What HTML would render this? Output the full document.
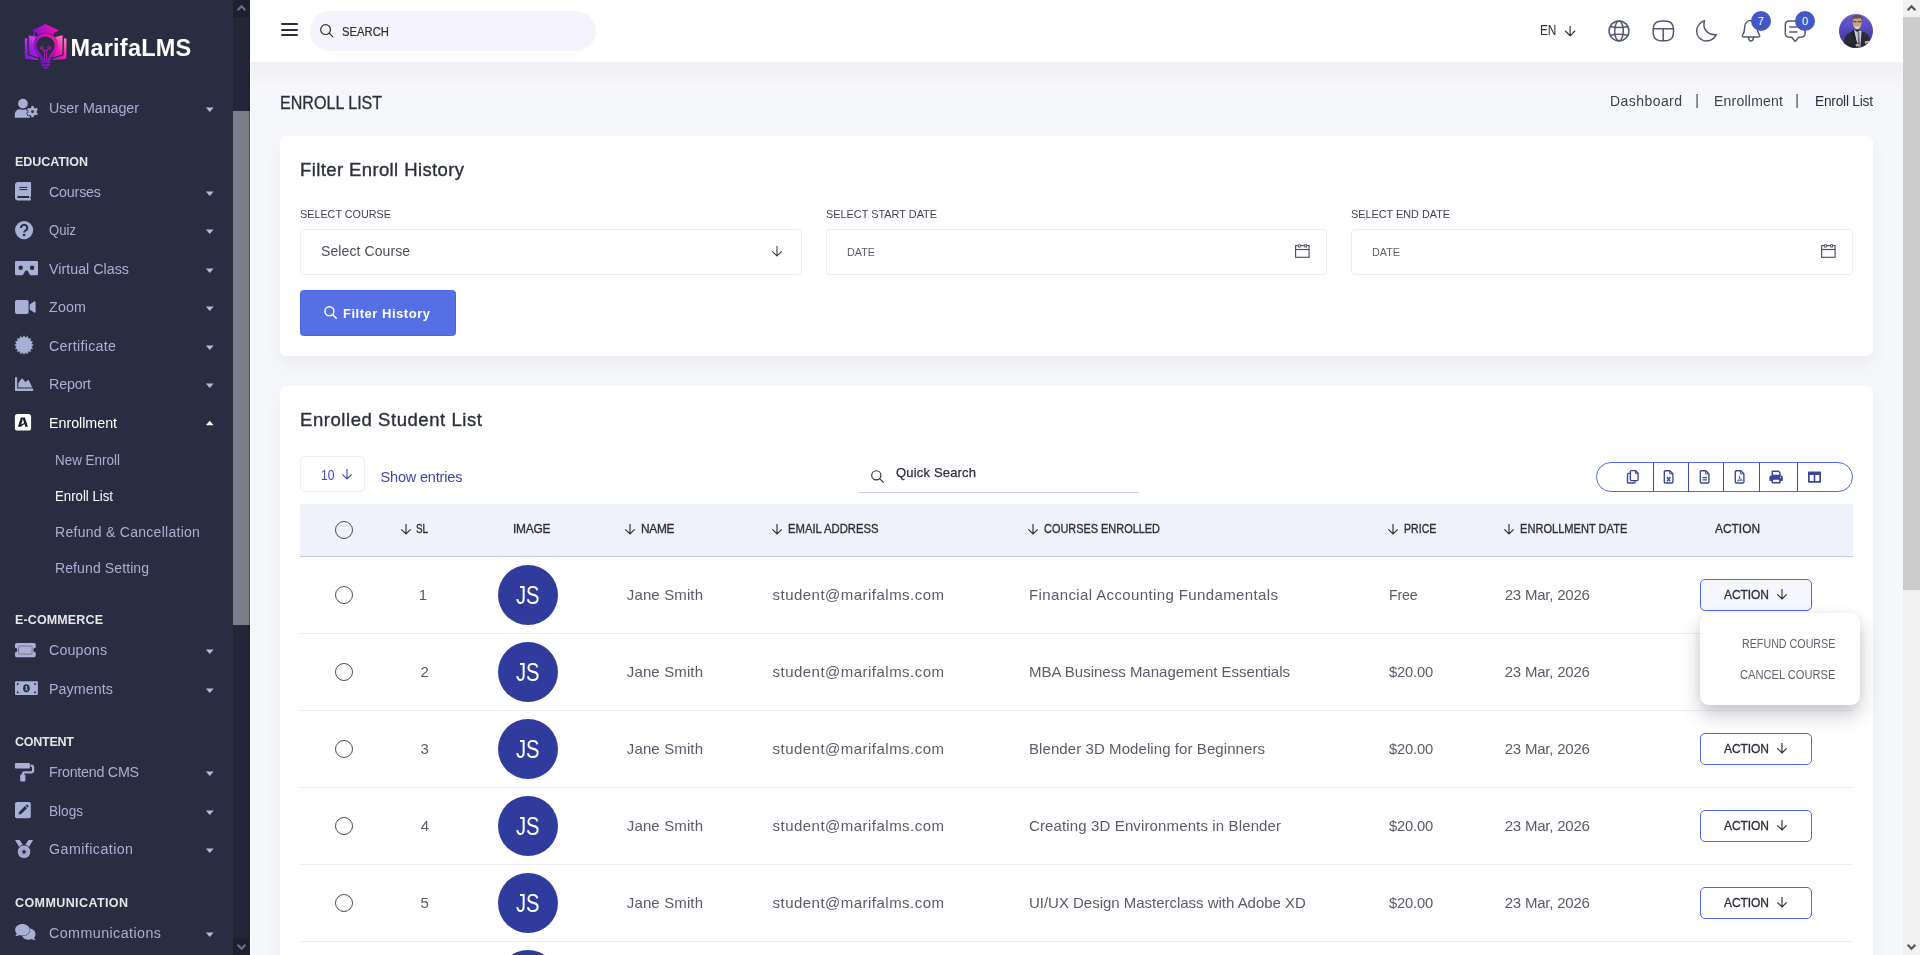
<!DOCTYPE html>
<html lang="en">
<head>
<meta charset="utf-8">
<title>Enroll List</title>
<style>
*{box-sizing:border-box;margin:0;padding:0}
html,body{width:1920px;height:955px;overflow:hidden;background:#f6f7fa;font-family:"Liberation Sans",sans-serif;}
.abs,.t,svg.i{position:absolute}
.t{white-space:pre;line-height:24px;height:24px;}
#page{position:absolute;left:0;top:0;width:1920px;height:955px;overflow:hidden;background:#f6f7fa}
/* sidebar */
#sb{left:0;top:0;width:233px;height:955px;background:#292d41}
#sbtrack{left:233px;top:0;width:17px;height:955px;background:#242638}
#sbthumb{left:233px;top:111px;width:17px;height:514px;background:#7b7d89}
.caret{width:0;height:0;border-left:4.5px solid transparent;border-right:4.5px solid transparent;border-top:5px solid #a8b1d3}
.caret.up{border-top:none;border-bottom:5px solid #fff}
/* header */
#hd{left:250px;top:0;width:1653px;height:62px;background:#fff}
#hdsh{left:250px;top:62px;width:1653px;height:26px;background:linear-gradient(#efeff4,#f6f7fb)}
#srch{left:310px;top:11px;width:286px;height:40px;border-radius:20px;background:#f4f4fa}
.bar{left:281px;width:16.5px;height:2.4px;background:#2b2f3a;border-radius:1px}
/* page scrollbar */
#pgtrack{left:1903px;top:0;width:17px;height:955px;background:#f1f1f1}
#pgthumb{left:1903px;top:17px;width:17px;height:573px;background:#cccccc}
/* cards */
.card{background:#fff;border-radius:6px;left:280px;width:1593px;box-shadow:0 10px 18px rgba(90,90,130,.06)}
.inp{height:46px;top:229px;border:1px solid #eceef4;border-radius:4px;background:#fff}
#fbtn{left:300px;top:290px;width:156px;height:46px;background:#566fe4;border:1px solid #4a63e2;border-radius:3.5px}
#thead{left:300px;top:504px;width:1553px;height:53px;background:#eff2f8;border-bottom:1px solid #c5cbe4}
.rb{left:300px;width:1553px;height:1px;background:#eceef4}
.cb{width:18px;height:18px;border:1.3px solid #4a4d55;border-radius:50%;left:335px;background:#fff}
.av{left:498px;width:60px;height:60px;border-radius:50%;background:#303b9e;color:#fff;text-align:center;font-size:25px;line-height:60px;letter-spacing:0.5px}
.ab{left:1700px;width:112px;height:32px;border:1.2px solid #4f64e6;border-radius:5px;background:#fff}
#dd{left:1700px;top:613px;width:160px;height:92px;background:#fff;border-radius:9px;box-shadow:0 10px 20px rgba(20,22,40,.22),0 2px 8px rgba(20,22,40,.06)}
#bg{left:1596px;top:462px;width:257px;height:30px;border:1px solid #5468e2;border-radius:15px;background:#fff}
.dv{top:462.5px;width:1px;height:29px;background:#3f4fae}
#sel10{left:300px;top:456px;width:64.5px;height:36px;border:1px solid #eceef4;border-radius:5px;background:#fff}
#qsl{left:859px;top:491.5px;width:280px;height:1px;background:#c4c9dc}
.badge{width:22px;height:22px;border-radius:50%;background:#4457c8;color:#fff;font-size:11px;line-height:22px;text-align:center}
</style>
</head>
<body>
<div id="page">
<!-- sidebar -->
<div id="sb" class="abs"></div>
<div id="sbtrack" class="abs"></div>
<div id="sbthumb" class="abs"></div>
<div class="abs" style="left:249px;top:0;width:1px;height:955px;background:rgba(10,12,30,.45)"></div>
<div class="abs" style="left:250px;top:0;width:1.2px;height:955px;background:#fff;z-index:2"></div>
<svg class="i" style="left:20px;top:18px" width="52" height="56" viewBox="0 0 52 56"><defs>
<linearGradient id="lg1" x1="0" y1="1" x2="1" y2="0"><stop offset="0" stop-color="#6a10d2"/><stop offset="0.45" stop-color="#a80fc8"/><stop offset="0.8" stop-color="#f012a8"/><stop offset="1" stop-color="#ff2aa0"/></linearGradient>
<linearGradient id="lgL" x1="0" y1="1" x2="0.6" y2="0"><stop offset="0" stop-color="#7510d0"/><stop offset="0.6" stop-color="#b026e0"/><stop offset="1" stop-color="#e060f0"/></linearGradient>
<linearGradient id="lgR" x1="0" y1="1" x2="0.7" y2="0"><stop offset="0" stop-color="#b010c0"/><stop offset="0.5" stop-color="#f018b0"/><stop offset="1" stop-color="#ff70c0"/></linearGradient>
<linearGradient id="lgC" x1="0" y1="0.6" x2="1" y2="0.3"><stop offset="0" stop-color="#7a14d4"/><stop offset="0.5" stop-color="#c010c0"/><stop offset="1" stop-color="#ff10a0"/></linearGradient>
<linearGradient id="lgB" x1="0" y1="0" x2="1" y2="0"><stop offset="0" stop-color="#6c12d0"/><stop offset="1" stop-color="#a010c8"/></linearGradient>
</defs><path d="M4.70 20.60L7.20 20.20L7.60 37.20L18.00 40.80L18.60 42.20L4.90 40.80z" fill="url(#lgL)"/><path d="M8.60 17.40L16.40 18.60C13.00 23.00 12.40 31.00 19.40 39.80L8.90 36.60z" fill="url(#lgL)"/><path d="M46.50 20.60L44.00 20.20L43.60 37.20L33.00 40.80L32.40 42.20L46.30 40.80z" fill="url(#lgR)"/><path d="M42.60 17.20L34.80 19.00C38.20 23.00 38.80 31.00 31.60 39.80L42.30 36.60z" fill="url(#lgR)"/><path fill-rule="evenodd" d="M25.50 15.60C32.60 15.60 37.60 20.80 37.60 27.40C37.60 32.60 34.60 35.00 31.40 39.00C30.40 40.30 30.40 41.30 30.20 42.40L20.80 42.40C20.60 41.30 20.60 40.30 19.60 39.00C16.40 35.00 13.40 32.60 13.40 27.40C13.40 20.80 18.40 15.60 25.50 15.60zM25.50 18.40C20.20 18.40 16.30 22.40 16.30 27.60C16.30 31.60 18.80 33.80 21.40 37.20C22.60 38.80 22.90 40.20 23.00 41.60L28.00 41.60C28.10 40.20 28.40 38.80 29.60 37.20C32.20 33.80 34.70 31.60 34.70 27.60C34.70 22.40 30.80 18.40 25.50 18.40z" fill="url(#lg1)"/><g fill="none" stroke="#c41cc0" stroke-width="0.9"><circle cx="21.799999999999997" cy="30" r="1.45"/><circle cx="29.200000000000003" cy="30" r="1.45"/><path d="M22.60 31.20C23.60 32.00 24.30 32.60 24.30 34.00L24.30 42.00M28.40 31.20C27.40 32.00 26.70 32.60 26.70 34.00L26.70 42.00M23.00 32.40L28.00 32.40"/></g><path d="M20.50 43.40L30.60 42.60L30.50 44.60L20.60 45.40z M20.90 46.40L30.30 45.60L30.00 47.60L21.30 48.40z M22.60 49.20L28.80 48.60C28.00 50.40 26.80 51.10 25.60 51.10C24.40 51.10 23.40 50.40 22.60 49.20z" fill="url(#lgB)"/><path d="M25.50 5.90L39.20 12.40L33.80 15.00L33.80 17.60C29.00 14.40 22.00 14.40 17.30 17.60L17.30 15.10L12.00 12.40z" fill="url(#lgC)"/><path d="M14.00 13.40L14.60 13.70L14.90 19.40L13.20 19.40z" fill="#8a22d8"/></svg>
<svg class="i" style="left:205px;top:107.1px" width="10" height="6" viewBox="0 0 10 6"><path d="M0.9 0.6h7.7L4.75 5.1z" fill="#b3bbdf"/></svg>
<svg class="i" style="left:205px;top:191.1px" width="10" height="6" viewBox="0 0 10 6"><path d="M0.9 0.6h7.7L4.75 5.1z" fill="#b3bbdf"/></svg>
<svg class="i" style="left:205px;top:229.1px" width="10" height="6" viewBox="0 0 10 6"><path d="M0.9 0.6h7.7L4.75 5.1z" fill="#b3bbdf"/></svg>
<svg class="i" style="left:205px;top:268.1px" width="10" height="6" viewBox="0 0 10 6"><path d="M0.9 0.6h7.7L4.75 5.1z" fill="#b3bbdf"/></svg>
<svg class="i" style="left:205px;top:306.1px" width="10" height="6" viewBox="0 0 10 6"><path d="M0.9 0.6h7.7L4.75 5.1z" fill="#b3bbdf"/></svg>
<svg class="i" style="left:205px;top:345.1px" width="10" height="6" viewBox="0 0 10 6"><path d="M0.9 0.6h7.7L4.75 5.1z" fill="#b3bbdf"/></svg>
<svg class="i" style="left:205px;top:383.1px" width="10" height="6" viewBox="0 0 10 6"><path d="M0.9 0.6h7.7L4.75 5.1z" fill="#b3bbdf"/></svg>
<svg class="i" style="left:205px;top:649.1px" width="10" height="6" viewBox="0 0 10 6"><path d="M0.9 0.6h7.7L4.75 5.1z" fill="#b3bbdf"/></svg>
<svg class="i" style="left:205px;top:688.1px" width="10" height="6" viewBox="0 0 10 6"><path d="M0.9 0.6h7.7L4.75 5.1z" fill="#b3bbdf"/></svg>
<svg class="i" style="left:205px;top:771.1px" width="10" height="6" viewBox="0 0 10 6"><path d="M0.9 0.6h7.7L4.75 5.1z" fill="#b3bbdf"/></svg>
<svg class="i" style="left:205px;top:810.1px" width="10" height="6" viewBox="0 0 10 6"><path d="M0.9 0.6h7.7L4.75 5.1z" fill="#b3bbdf"/></svg>
<svg class="i" style="left:205px;top:848.1px" width="10" height="6" viewBox="0 0 10 6"><path d="M0.9 0.6h7.7L4.75 5.1z" fill="#b3bbdf"/></svg>
<svg class="i" style="left:205px;top:932.1px" width="10" height="6" viewBox="0 0 10 6"><path d="M0.9 0.6h7.7L4.75 5.1z" fill="#b3bbdf"/></svg>
<svg class="i" style="left:205px;top:419.5px" width="10" height="6" viewBox="0 0 10 6"><path d="M0.9 5.2h7.7L4.75 0.7z" fill="#ffffff"/></svg>
<svg class="i" style="left:14px;top:98px" width="26" height="22" viewBox="0 0 26 22" ><circle cx="8.95" cy="5.65" r="4.85" fill="#a8b1d3"/><path d="M0.8 19.7v-3.6a4.9 4.9 0 0 1 4.9-4.9h0.7a6 6 0 0 0 5.1 0h0.7a4.9 4.9 0 0 1 3.6 1.6v6.9z" fill="#a8b1d3"/><path d="M17.20 9.66L17.31 8.07L19.69 8.07L19.80 9.66L21.31 10.53L22.74 9.84L23.92 11.89L22.61 12.78L22.61 14.52L23.92 15.41L22.74 17.46L21.31 16.77L19.80 17.64L19.69 19.23L17.31 19.23L17.20 17.64L15.69 16.77L14.26 17.46L13.08 15.41L14.39 14.52L14.39 12.78L13.08 11.89L14.26 9.84L15.69 10.53z" fill="#a8b1d3" stroke="#292d41" stroke-width="1.6" stroke-linejoin="round" paint-order="stroke"/><circle cx="18.5" cy="13.65" r="1.45" fill="#292d41"/></svg>
<svg class="i" style="left:14px;top:181px" width="20" height="21" viewBox="0 0 20 21" ><path d="M4 1h12.2a0.9 0.9 0 0 1 0.9 0.9v12.6a0.9 0.9 0 0 1-0.6 0.85v2.3a0.9 0.9 0 0 1 0.6 0.85v0a0.9 0.9 0 0 1-0.9 0.9H4a3 3 0 0 1-3-3V4a3 3 0 0 1 3-3z" fill="#a8b1d3"/><rect x="5.4" y="5.9" width="7.9" height="1" fill="#292d41"/><rect x="5.4" y="8.1" width="7.9" height="1" fill="#292d41"/><path d="M4.2 14.9h10.9v2H4.2a1 1 0 0 1 0-2z" fill="#292d41"/></svg>
<svg class="i" style="left:14px;top:220px" width="21" height="21" viewBox="0 0 21 21" ><circle cx="10.1" cy="10.1" r="9.1" fill="#a8b1d3"/><path d="M7 7.9a3.15 3 0 1 1 4.6 2.6c-1 0.6-1.45 1-1.45 2.1" fill="none" stroke="#292d41" stroke-width="2"/><circle cx="10.1" cy="15" r="1.35" fill="#292d41"/></svg>
<svg class="i" style="left:14px;top:260px" width="26" height="17" viewBox="0 0 26 17" ><path d="M2.3 1h20.4a1.3 1.3 0 0 1 1.3 1.3v11.7a1.3 1.3 0 0 1-1.3 1.3h-5.6a1.7 1.7 0 0 1-1.5-0.95l-1.45-2.9a1.9 1.9 0 0 0-3.3 0l-1.45 2.9a1.7 1.7 0 0 1-1.5 0.95H2.3a1.3 1.3 0 0 1-1.3-1.3V2.3a1.3 1.3 0 0 1 1.3-1.3z" fill="#a8b1d3"/><circle cx="6.7" cy="7.75" r="2.25" fill="#292d41"/><circle cx="18.1" cy="7.75" r="2.25" fill="#292d41"/></svg>
<svg class="i" style="left:14px;top:299px" width="23" height="16" viewBox="0 0 23 16" ><rect x="1" y="1" width="13.6" height="14" rx="2" fill="#a8b1d3"/><path d="M15.7 5.6l4.4-3.05a0.95 0.95 0 0 1 1.5 0.8v9.3a0.95 0.95 0 0 1-1.5 0.8l-4.4-3.05z" fill="#a8b1d3"/></svg>
<svg class="i" style="left:14px;top:335px" width="20" height="21" viewBox="0 0 20 21" ><path d="M10.00 0.60L11.46 2.74L13.64 1.32L14.17 3.86L16.72 3.38L16.24 5.93L18.78 6.46L17.36 8.64L19.50 10.10L17.36 11.56L18.78 13.74L16.24 14.27L16.72 16.82L14.17 16.34L13.64 18.88L11.46 17.46L10.00 19.60L8.54 17.46L6.36 18.88L5.83 16.34L3.28 16.82L3.76 14.27L1.22 13.74L2.64 11.56L0.50 10.10L2.64 8.64L1.22 6.46L3.76 5.93L3.28 3.38L5.83 3.86L6.36 1.32L8.54 2.74z" fill="#a8b1d3" stroke="#a8b1d3" stroke-width="0.3" stroke-linejoin="round"/></svg>
<svg class="i" style="left:14px;top:376px" width="20" height="16" viewBox="0 0 20 16" ><path d="M1 1.3h2.2v11.3h15.9v2.3H1z" fill="#a8b1d3"/><path d="M4.3 11.6V7.2L7.6 2.6a0.45 0.45 0 0 1 0.7 0L11.3 6l2.9-1.9a0.45 0.45 0 0 1 0.6 0.15L18.3 11.6z" fill="#a8b1d3"/></svg>
<svg class="i" style="left:14px;top:413px" width="19" height="19" viewBox="0 0 19 19" ><rect x="0.9" y="1" width="16.2" height="16.6" rx="2.7" fill="#ffffff"/><path fill-rule="evenodd" d="M3.9 13.8L6.85 4.4H10.95L13.9 13.8H11.25L10.45 11.1L6.9 13.8z M8.9 6L7.25 11.55L10.1 10.1z" fill="#1e2133"/></svg>
<svg class="i" style="left:14px;top:642px" width="23" height="17" viewBox="0 0 23 17" ><path d="M2.6 1h17.5a1.6 1.6 0 0 1 1.6 1.6v3.1a2.4 2.4 0 0 0 0 4.8v3.1a1.6 1.6 0 0 1-1.6 1.6H2.6a1.6 1.6 0 0 1-1.6-1.6v-3.1a2.4 2.4 0 0 0 0-4.8V2.6a1.6 1.6 0 0 1 1.6-1.6z" fill="#a8b1d3"/><rect x="4.6" y="4.1" width="13.5" height="8" rx="0.8" fill="none" stroke="#6d7393" stroke-width="0.9"/></svg>
<svg class="i" style="left:14px;top:680px" width="26" height="17" viewBox="0 0 26 17" ><rect x="1" y="1.3" width="22.9" height="13.7" rx="1" fill="#a8b1d3"/><ellipse cx="12.4" cy="8.2" rx="3.3" ry="4" fill="#292d41"/><path d="M11.3 6.6l1.1-0.8h0.7v3.6h0.8v0.95h-2.9v-0.95h0.9V7.2l-0.6 0.25z" fill="#a8b1d3"/><path d="M2.9 5.2a2 2 0 0 0 2-2h-2z M21.9 5.2a2 2 0 0 1-2-2h2z M2.9 11.2a2 2 0 0 1 2 2h-2z M21.9 11.2a2 2 0 0 0-2 2h2z" fill="#292d41"/></svg>
<svg class="i" style="left:14px;top:762px" width="21" height="21" viewBox="0 0 21 21" ><rect x="0.9" y="0.9" width="15" height="5.6" rx="1.1" fill="#a8b1d3"/><path d="M16.6 3.7h0.6a1.9 1.9 0 0 1 1.9 1.9v2.9a1.9 1.9 0 0 1-1.9 1.9h-6.5a1.9 1.9 0 0 0-1.9 1.9v1.3" fill="none" stroke="#a8b1d3" stroke-width="2.2"/><rect x="6.2" y="12.5" width="5.2" height="7" rx="1.1" fill="#a8b1d3"/></svg>
<svg class="i" style="left:14px;top:801px" width="18" height="19" viewBox="0 0 18 19" ><rect x="1" y="1" width="15.8" height="16.2" rx="2" fill="#a8b1d3"/><path d="M4.6 13.6l0.5-2.6 5.9-5.9 2.1 2.1-5.9 5.9z M11.7 4.4l0.65-0.65a0.7 0.7 0 0 1 1 0l1.1 1.1a0.7 0.7 0 0 1 0 1l-0.65 0.65z" fill="#292d41"/></svg>
<svg class="i" style="left:14px;top:839px" width="21" height="21" viewBox="0 0 21 21" ><path d="M1 1h4.6l5 7.6-3.7 2.2z M19.1 1h-4.6l-4.9 7.5 3.6 2.3z" fill="#a8b1d3"/><circle cx="10.05" cy="12.8" r="6.7" fill="#a8b1d3" stroke="#292d41" stroke-width="0.9"/><circle cx="10.05" cy="12.8" r="4.3" fill="none" stroke="#8f97bb" stroke-width="0.7"/><path d="M10.05 9.80L10.84 11.81L13.00 11.94L11.33 13.32L11.87 15.41L10.05 14.25L8.23 15.41L8.77 13.32L7.10 11.94L9.26 11.81z" fill="#292d41"/></svg>
<svg class="i" style="left:14px;top:922px" width="23" height="20" viewBox="0 0 23 20" ><path d="M14.5 6.3c3.9 0 7 2.6 7 5.9 0 1.35-0.55 2.6-1.45 3.6 0.35 0.9 1 1.7 1.6 2.35-1.5 0.1-2.9-0.4-3.9-1.05-1 0.4-2.1 0.65-3.25 0.65-3.9 0-7-2.6-7-5.9z" fill="#a8b1d3"/><path d="M8.45 1.9c4 0 7.3 2.6 7.3 5.85s-3.3 5.85-7.3 5.85c-1.15 0-2.25-0.2-3.2-0.6-1 0.7-2.5 1.2-4.2 1.15 0.75-0.75 1.35-1.5 1.7-2.45C1.75 10.65 1.15 9.3 1.15 7.75c0-3.25 3.3-5.85 7.3-5.85z" fill="#a8b1d3" stroke="#292d41" stroke-width="1.1" paint-order="stroke"/></svg>
<!-- header -->
<div id="hdsh" class="abs"></div>
<div id="hd" class="abs"></div>
<div class="abs bar" style="top:23.1px"></div>
<div class="abs bar" style="top:28.5px"></div>
<div class="abs bar" style="top:33.9px"></div>
<div id="srch" class="abs"></div>
<svg class="i" style="left:318px;top:22px" width="18" height="18" viewBox="0 0 18 18"><circle cx="7.6" cy="7.6" r="4.9" fill="none" stroke="#2b2f3a" stroke-width="1.2"/><path d="M11.2 11.2l3.6 3.6" stroke="#2b2f3a" stroke-width="1.2" stroke-linecap="round"/></svg>
<svg class="i" style="left:1562px;top:24px" width="16" height="15" viewBox="0 0 16 15"><path d="M8.1 2.2v9.4M3.4 7l4.7 4.8 4.7-4.8" fill="none" stroke="#2b2f3a" stroke-width="1.15" stroke-linecap="round" stroke-linejoin="round"/></svg>
<svg class="i" style="left:1607px;top:19px" width="24" height="24" viewBox="0 0 24 24"><g fill="none" stroke="#535971" stroke-width="1.5"><circle cx="12" cy="11.9" r="9.95"/><ellipse cx="12" cy="11.9" rx="4.3" ry="9.95"/><path d="M2.9 7.6c5.5 1.1 12.7 1.1 18.2 0M2.9 16.2c5.5-1.1 12.7-1.1 18.2 0"/></g></svg>
<svg class="i" style="left:1651px;top:19px" width="25" height="24" viewBox="0 0 25 24"><g fill="none" stroke="#535971" stroke-width="1.5"><path d="M12.35 1.95c7.6 0 10.2 2.4 10.2 9.95s-2.6 9.95-10.2 9.95S2.15 19.45 2.15 11.9 4.75 1.95 12.35 1.95z"/><path d="M2.3 9.8h20.1M12.2 9.8v12"/></g></svg>
<svg class="i" style="left:1694px;top:19px" width="25" height="24" viewBox="0 0 25 24"><path d="M10.6 1.8C8.2 8.6 12.6 16.3 22.2 15.6 20.4 19.4 16.7 21.9 12.4 21.9 6.6 21.9 2.7 17.4 2.7 12.2 2.7 7.3 6 3 10.6 1.8z" fill="none" stroke="#535971" stroke-width="1.5" stroke-linejoin="round"/></svg>
<svg class="i" style="left:1740px;top:18px" width="24" height="26" viewBox="0 0 24 26"><g fill="none" stroke="#535971" stroke-width="1.5" stroke-linecap="round" stroke-linejoin="round"><path d="M11 2.6c-3.9 0-6.3 2.9-6.3 6.6 0 4.300-1.100 6.400-2.100 7.700-0.700 0.900-0.100 2.100 1.000 2.100h14.800c1.100 0 1.700-1.200 1.000-2.100-1.000-1.300-2.100-3.400-2.100-7.700 0-3.700-2.400-6.600-6.300-6.600z"/><path d="M8.500 19.600c0.300 2.100 1.200 3.400 2.500 3.400s2.200-1.300 2.500-3.400"/></g></svg>
<svg class="i" style="left:1783px;top:18px" width="25" height="26" viewBox="0 0 25 26"><g fill="none" stroke="#535971" stroke-width="1.5" stroke-linecap="round" stroke-linejoin="round"><path d="M6.2 3h12c2.500 0 3.900 1.400 3.900 3.900v8.400c0 2.500-1.400 3.900-3.900 3.900h-2.600l-2.700 3.600c-0.400 0.500-1.000 0.500-1.400 0l-2.700-3.600h-2.600c-2.500 0-3.900-1.400-3.900-3.900V6.900c0-2.500 1.400-3.900 3.900-3.900z"/><path d="M6.700 8.900h7.300M6.700 13.900h7.300"/></g></svg>
<div class="abs badge" style="left:1750.8px;top:10.8px;width:20.2px;height:20.2px;line-height:20.6px">7</div>
<div class="abs badge" style="left:1795px;top:10.8px;width:20.2px;height:20.2px;line-height:20.6px">0</div>
<svg class="i" style="left:1838px;top:12px" width="36" height="38" viewBox="0 0 36 38">
<defs><linearGradient id="avg" x1="0" y1="0" x2="0" y2="1"><stop offset="0" stop-color="#6f5cd8"/><stop offset="0.5" stop-color="#5546b8"/><stop offset="1" stop-color="#32298e"/></linearGradient>
<clipPath id="avc"><circle cx="18" cy="19" r="17"/></clipPath>
<filter id="avb" x="-10%" y="-10%" width="120%" height="120%"><feGaussianBlur stdDeviation="0.45"/></filter></defs>
<circle cx="18" cy="19" r="17" fill="url(#avg)"/>
<g clip-path="url(#avc)" filter="url(#avb)">
<path d="M6.400 37c-0.600-5.500 0-11.600 1.400-13.600 1.200-1.600 4.700-2.700 8.400-5.600l5.600 0.200c3 2 5.600 2.500 7.200 3.700 2.400 2 3.400 8.800 3.600 15.300z" fill="#292a33"/>
<path d="M15.800 17.400l3.400 2.600 3.600-1.800 0.700 1.400-1.300 17.400h-2.500z" fill="#ccd0dc"/>
<path d="M19.500 20.100l1.700-0.300 1.200 15.900-1.400 0.900-1-0.800z" fill="#6c7283"/>
<path d="M15.800 17.600l4.200 17.500-0.800 1.500-6-16.500z" fill="#1f2028"/>
<path d="M14.700 10.200c0-3.400 1.700-5.600 4.500-5.600s4.500 2.200 4.500 5.600c0 3.600-1.800 6.800-4.500 6.800s-4.500-3.200-4.500-6.800z" fill="#c9a088"/>
<path d="M16 13.600c0.800 2.200 1.800 3.600 3.200 3.600s2.500-1.400 3.200-3.600c-0.600 0.800-1.800 1.200-3.200 1.200s-2.600-0.400-3.200-1.200z" fill="#dcd8d6"/>
<path d="M13.900 10.300c-1-4.300 1-7.400 5.300-7.400 4 0 6.300 2.700 5.400 7.200-0.500-2.300-1.300-3.600-2.300-4.200-1.800 0.800-5.300 0.800-6.600 0.600-0.900 0.900-1.400 2.200-1.800 3.800z" fill="#5b524b"/>
<path d="M15.100 9.700h3.500M19.800 9.700h3.500" stroke="#3a2f2c" stroke-width="1"/>
<path d="M9.500 33.500c3-2.200 9-3.400 12.300-2.600l0.500 2.500c-3.800 0.600-7.400 2-9.600 3.800z" fill="#23242c"/>
<path d="M17.400 32.200c1.400-0.700 3.200-0.900 4.400-0.600l0.600 2.200c-1.500 0.100-3.100 0.400-4.300 0.900z" fill="#c9a088"/>
<path d="M26.600 29.600c1.300-0.700 3-1 4.400-0.700l0.300 1.900c-1.500 0.200-3 0.700-4.200 1.300z" fill="#c9a088"/>
<rect x="20.900" y="34.200" width="1.600" height="2.200" fill="#2f7fd0"/>
</g></svg>
<!-- page scrollbar -->
<div id="pgtrack" class="abs"></div>
<div id="pgthumb" class="abs"></div>
<!-- cards -->
<div class="abs card" style="top:136px;height:220px"></div>
<div class="abs card" style="top:386px;height:600px"></div>
<div class="abs inp" style="left:300px;width:501.5px"></div>
<div class="abs inp" style="left:825.5px;width:501.5px"></div>
<div class="abs inp" style="left:1351px;width:501.5px"></div>
<div id="fbtn" class="abs"></div>
<div id="sel10" class="abs"></div>
<div id="qsl" class="abs"></div>
<div id="bg" class="abs"></div>
<div class="abs dv" style="left:1653px"></div>
<div class="abs dv" style="left:1688px"></div>
<div class="abs dv" style="left:1723px"></div>
<div class="abs dv" style="left:1759px"></div>
<div class="abs dv" style="left:1797px"></div>
<div id="thead" class="abs"></div>
<div class="abs rb" style="top:633px"></div>
<div class="abs rb" style="top:710px"></div>
<div class="abs rb" style="top:787px"></div>
<div class="abs rb" style="top:864px"></div>
<div class="abs rb" style="top:941px"></div>
<div class="abs cb" style="top:521px;background:transparent"></div>
<div class="abs cb" style="top:586px"></div>
<div class="abs cb" style="top:663px"></div>
<div class="abs cb" style="top:740px"></div>
<div class="abs cb" style="top:817px"></div>
<div class="abs cb" style="top:894px"></div>
<div class="abs av" style="top:565px"></div>
<div class="abs av" style="top:642px"></div>
<div class="abs av" style="top:719px"></div>
<div class="abs av" style="top:796px"></div>
<div class="abs av" style="top:873px"></div>
<div class="abs av" style="top:950px"></div>
<div class="abs ab" style="top:579px;background:#f6f7fd"></div>
<div class="abs ab" style="top:733px"></div>
<div class="abs ab" style="top:810px"></div>
<div class="abs ab" style="top:887px"></div>
<div id="dd" class="abs"></div>
<svg class="i" style="left:398.1px;top:520.7px" width="16" height="16" viewBox="0 0 16 16"><path d="M8 2.90V13.00M3.30 8.30L8 13.00L12.70 8.30" fill="none" stroke="#2b2f3a" stroke-width="1.15" stroke-linecap="butt" stroke-linejoin="miter"/></svg>
<svg class="i" style="left:622.4px;top:520.7px" width="16" height="16" viewBox="0 0 16 16"><path d="M8 2.90V13.00M3.30 8.30L8 13.00L12.70 8.30" fill="none" stroke="#2b2f3a" stroke-width="1.15" stroke-linecap="butt" stroke-linejoin="miter"/></svg>
<svg class="i" style="left:768.5px;top:520.7px" width="16" height="16" viewBox="0 0 16 16"><path d="M8 2.90V13.00M3.30 8.30L8 13.00L12.70 8.30" fill="none" stroke="#2b2f3a" stroke-width="1.15" stroke-linecap="butt" stroke-linejoin="miter"/></svg>
<svg class="i" style="left:1025.0px;top:520.7px" width="16" height="16" viewBox="0 0 16 16"><path d="M8 2.90V13.00M3.30 8.30L8 13.00L12.70 8.30" fill="none" stroke="#2b2f3a" stroke-width="1.15" stroke-linecap="butt" stroke-linejoin="miter"/></svg>
<svg class="i" style="left:1385.3px;top:520.7px" width="16" height="16" viewBox="0 0 16 16"><path d="M8 2.90V13.00M3.30 8.30L8 13.00L12.70 8.30" fill="none" stroke="#2b2f3a" stroke-width="1.15" stroke-linecap="butt" stroke-linejoin="miter"/></svg>
<svg class="i" style="left:1500.7px;top:520.7px" width="16" height="16" viewBox="0 0 16 16"><path d="M8 2.90V13.00M3.30 8.30L8 13.00L12.70 8.30" fill="none" stroke="#2b2f3a" stroke-width="1.15" stroke-linecap="butt" stroke-linejoin="miter"/></svg>
<svg class="i" style="left:769.0px;top:242.7px" width="16" height="16" viewBox="0 0 16 16"><path d="M8 2.90V13.00M3.30 8.30L8 13.00L12.70 8.30" fill="none" stroke="#3d4250" stroke-width="1.1" stroke-linecap="butt" stroke-linejoin="miter"/></svg>
<svg class="i" style="left:339.2px;top:466.2px" width="16" height="16" viewBox="0 0 16 16"><path d="M8 2.90V13.00M3.30 8.30L8 13.00L12.70 8.30" fill="none" stroke="#3a48a8" stroke-width="1.1" stroke-linecap="butt" stroke-linejoin="miter"/></svg>
<svg class="i" style="left:1773.7px;top:586.4px" width="16" height="16" viewBox="0 0 16 16"><path d="M8 2.90V13.00M3.30 8.30L8 13.00L12.70 8.30" fill="none" stroke="#2b2f3a" stroke-width="1.15" stroke-linecap="butt" stroke-linejoin="miter"/></svg>
<svg class="i" style="left:1773.7px;top:740.4px" width="16" height="16" viewBox="0 0 16 16"><path d="M8 2.90V13.00M3.30 8.30L8 13.00L12.70 8.30" fill="none" stroke="#2b2f3a" stroke-width="1.15" stroke-linecap="butt" stroke-linejoin="miter"/></svg>
<svg class="i" style="left:1773.7px;top:817.4px" width="16" height="16" viewBox="0 0 16 16"><path d="M8 2.90V13.00M3.30 8.30L8 13.00L12.70 8.30" fill="none" stroke="#2b2f3a" stroke-width="1.15" stroke-linecap="butt" stroke-linejoin="miter"/></svg>
<svg class="i" style="left:1773.7px;top:894.4px" width="16" height="16" viewBox="0 0 16 16"><path d="M8 2.90V13.00M3.30 8.30L8 13.00L12.70 8.30" fill="none" stroke="#2b2f3a" stroke-width="1.15" stroke-linecap="butt" stroke-linejoin="miter"/></svg>
<svg class="i" style="left:322.0px;top:304.0px" width="17" height="17" viewBox="0 0 17 17"><circle cx="7.4" cy="7.3" r="4.5" fill="none" stroke="#fff" stroke-width="1.5"/><path d="M10.7 10.7l3.5 3.5" stroke="#fff" stroke-width="1.6" stroke-linecap="round"/></svg>
<svg class="i" style="left:869.0px;top:467.6px" width="17" height="17" viewBox="0 0 17 17"><circle cx="7.3" cy="7.3" r="4.6" fill="none" stroke="#2b2f3a" stroke-width="1.15"/><path d="M10.6 10.7l3.7 3.7" stroke="#2b2f3a" stroke-width="1.15" stroke-linecap="round"/></svg>
<svg class="i" style="left:1294.0px;top:243.0px" width="17" height="16" viewBox="0 0 17 16"><g fill="none" stroke="#4a4f5a" stroke-width="1.15"><rect x="1.6" y="2.6" width="13.5" height="11.7"/><path d="M1.6 6.5h13.5"/></g><rect x="4.1" y="1.3" width="2.6" height="3.2" fill="#4a4f5a"/><rect x="10.4" y="1.3" width="2.6" height="3.2" fill="#4a4f5a"/><rect x="4.9" y="2" width="1" height="1.6" fill="#fff"/><rect x="11.2" y="2" width="1" height="1.6" fill="#fff"/></svg>
<svg class="i" style="left:1819.6px;top:243.0px" width="17" height="16" viewBox="0 0 17 16"><g fill="none" stroke="#4a4f5a" stroke-width="1.15"><rect x="1.6" y="2.6" width="13.5" height="11.7"/><path d="M1.6 6.5h13.5"/></g><rect x="4.1" y="1.3" width="2.6" height="3.2" fill="#4a4f5a"/><rect x="10.4" y="1.3" width="2.6" height="3.2" fill="#4a4f5a"/><rect x="4.9" y="2" width="1" height="1.6" fill="#fff"/><rect x="11.2" y="2" width="1" height="1.6" fill="#fff"/></svg>
<svg class="i" style="left:1625.0px;top:468.0px" width="16" height="18" viewBox="0 0 16 18"><g fill="none" stroke="#3b4796" stroke-width="1.35" stroke-linejoin="round"><path d="M5.3 5.3v-1.600a1.1 1.1 0 0 1 1.100-1.100h4.100l2.600 2.600v6.300a1.1 1.1 0 0 1-1.100 1.100h-5.600a1.1 1.100 0 0 1-1.100-1.100z"/><path d="M5.300 5.300h-1.700a1.100 1.100 0 0 0-1.100 1.100v7.500a1.100 1.100 0 0 0 1.100 1.100h5.400a1.100 1.100 0 0 0 1.100-1.100v-1.300"/><path d="M10.400 2.800v2.500h2.600" stroke-width="1"/></g></svg>
<svg class="i" style="left:1662.3px;top:468.0px" width="14" height="18" viewBox="0 0 14 18"><path d="M3.400 2.700h4.400l3.100 3.100v8.100a1.100 1.100 0 0 1-1.100 1.100h-6.400a1.100 1.100 0 0 1-1.100-1.100v-10.100a1.100 1.100 0 0 1 1.100-1.100z" fill="none" stroke="#3b4796" stroke-width="1.35" stroke-linejoin="round"/><path d="M7.700 2.900v3h3" fill="none" stroke="#3b4796" stroke-width="1"/><path d="M5 9l3.300 4.300M8.300 9l-3.300 4.300" stroke="#3b4796" stroke-width="1.300" fill="none"/></svg>
<svg class="i" style="left:1697.5px;top:468.0px" width="14" height="18" viewBox="0 0 14 18"><path d="M3.400 2.700h4.400l3.100 3.100v8.100a1.100 1.100 0 0 1-1.100 1.100h-6.400a1.100 1.100 0 0 1-1.100-1.100v-10.100a1.100 1.100 0 0 1 1.100-1.100z" fill="none" stroke="#3b4796" stroke-width="1.35" stroke-linejoin="round"/><path d="M7.700 2.900v3h3" fill="none" stroke="#3b4796" stroke-width="1"/><path d="M4.600 9.500h4.400M4.600 11.900h4.400" stroke="#3b4796" stroke-width="1.250" fill="none"/></svg>
<svg class="i" style="left:1732.7px;top:468.0px" width="14" height="18" viewBox="0 0 14 18"><path d="M3.400 2.700h4.400l3.100 3.100v8.100a1.100 1.100 0 0 1-1.100 1.100h-6.400a1.100 1.100 0 0 1-1.100-1.100v-10.100a1.100 1.100 0 0 1 1.100-1.100z" fill="none" stroke="#3b4796" stroke-width="1.35" stroke-linejoin="round"/><path d="M7.700 2.900v3h3" fill="none" stroke="#3b4796" stroke-width="1"/><path d="M4.300 13c1.300-0.700 2.300-2.300 2.500-4.200 0.100-0.800-0.700-0.800-0.600 0 0.300 1.800 1.500 3 3.200 3.400-1.600-0.100-3.500 0.200-5.100 0.800z" stroke="#3b4796" stroke-width="0.800" fill="none" stroke-linejoin="round"/></svg>
<svg class="i" style="left:1768.0px;top:469.0px" width="16" height="16" viewBox="0 0 16 16"><path d="M4.300 2.300h6.300l1.300 1.300v3h-7.600z" fill="none" stroke="#3b4796" stroke-width="1.500" stroke-linejoin="round"/><path d="M2.900 6.400h10.400a1.500 1.500 0 0 1 1.500 1.500v3.400a0.600 0.600 0 0 1-0.600 0.600h-12.200a0.600 0.600 0 0 1-0.600-0.600v-3.400a1.500 1.500 0 0 1 1.500-1.500z" fill="#3b4796"/><rect x="4.300" y="10.100" width="7.600" height="3.600" fill="#fff" stroke="#3b4796" stroke-width="1.500" stroke-linejoin="round"/><circle cx="12.500" cy="8.400" r="0.600" fill="#fff"/></svg>
<svg class="i" style="left:1807.0px;top:470.0px" width="16" height="14" viewBox="0 0 16 14"><path d="M1.700 1.600h11.600a0.700 0.700 0 0 1 0.700 0.700v9.800a0.700 0.700 0 0 1-0.700 0.700h-11.600a0.700 0.700 0 0 1-0.700-0.700v-9.800a0.700 0.700 0 0 1 0.700-0.700z M2.700 4.900v6.200h4v-6.200z M8.300 4.900v6.200h4v-6.200z" fill="#3b4796" fill-rule="evenodd"/></svg>
<svg class="i" style="left:233.0px;top:0.0px" width="17" height="17" viewBox="0 0 17 17"><rect width="17" height="17" fill="#1e202e"/><path d="M4.6 10.3l3.9-4.100 3.900 4.100" fill="none" stroke="#6d707e" stroke-width="2.100"/></svg>
<svg class="i" style="left:233.0px;top:938.0px" width="17" height="17" viewBox="0 0 17 17"><rect width="17" height="17" fill="#1e202e"/><path d="M4.6 6.700l3.900 4.100 3.900-4.100" fill="none" stroke="#6d707e" stroke-width="2.100"/></svg>
<svg class="i" style="left:1903.0px;top:0.0px" width="17" height="17" viewBox="0 0 17 17"><rect width="17" height="17" fill="#f1f1f1"/><path d="M4.6 10.3l3.9-4.100 3.900 4.100" fill="none" stroke="#555555" stroke-width="2.100"/></svg>
<svg class="i" style="left:1903.0px;top:938.0px" width="17" height="17" viewBox="0 0 17 17"><rect width="17" height="17" fill="#f1f1f1"/><path d="M4.6 6.700l3.900 4.100 3.900-4.100" fill="none" stroke="#555555" stroke-width="2.100"/></svg>
<div id="txt" style="position:absolute;left:0;top:0;width:1920px;height:955px;will-change:transform">
<div class="t" style="left:49.0px;top:96.000px;font-size:14.25px;color:#a8b1d3;letter-spacing:-0.03px;">User Manager</div>
<div class="t" style="left:49.0px;top:180.000px;font-size:14.25px;color:#a8b1d3;letter-spacing:-0.18px;">Courses</div>
<div class="t" style="left:49.0px;top:218.000px;font-size:14.25px;color:#a8b1d3;letter-spacing:0.00px;transform:scaleX(0.921);transform-origin:0 50%;">Quiz</div>
<div class="t" style="left:49.0px;top:257.000px;font-size:14.25px;color:#a8b1d3;letter-spacing:0.02px;">Virtual Class</div>
<div class="t" style="left:49.0px;top:295.000px;font-size:14.25px;color:#a8b1d3;letter-spacing:0.19px;">Zoom</div>
<div class="t" style="left:49.0px;top:334.000px;font-size:14.25px;color:#a8b1d3;letter-spacing:0.28px;">Certificate</div>
<div class="t" style="left:49.0px;top:372.000px;font-size:14.25px;color:#a8b1d3;letter-spacing:-0.16px;">Report</div>
<div class="t" style="left:49.0px;top:638.000px;font-size:14.25px;color:#a8b1d3;letter-spacing:0.16px;">Coupons</div>
<div class="t" style="left:49.0px;top:677.000px;font-size:14.25px;color:#a8b1d3;letter-spacing:0.09px;">Payments</div>
<div class="t" style="left:49.0px;top:760.000px;font-size:14.25px;color:#a8b1d3;letter-spacing:-0.24px;">Frontend CMS</div>
<div class="t" style="left:49.0px;top:799.000px;font-size:14.25px;color:#a8b1d3;letter-spacing:0.00px;transform:scaleX(0.954);transform-origin:0 50%;">Blogs</div>
<div class="t" style="left:49.0px;top:837.000px;font-size:14.25px;color:#a8b1d3;letter-spacing:0.44px;">Gamification</div>
<div class="t" style="left:49.0px;top:921.000px;font-size:14.25px;color:#a8b1d3;letter-spacing:0.45px;">Communications</div>
<div class="t" style="left:49.0px;top:411.000px;font-size:14.25px;color:#ffffff;letter-spacing:-0.01px;">Enrollment</div>
<div class="t" style="left:55.0px;top:448.000px;font-size:14px;color:#a8b1d3;letter-spacing:0.00px;transform:scaleX(0.960);transform-origin:0 50%;">New Enroll</div>
<div class="t" style="left:55.0px;top:484.000px;font-size:14px;color:#ffffff;letter-spacing:0.00px;transform:scaleX(0.944);transform-origin:0 50%;">Enroll List</div>
<div class="t" style="left:55.0px;top:520.000px;font-size:14px;color:#a8b1d3;letter-spacing:0.28px;">Refund &amp; Cancellation</div>
<div class="t" style="left:55.0px;top:556.000px;font-size:14px;color:#a8b1d3;letter-spacing:0.11px;">Refund Setting</div>
<div class="t" style="left:15.0px;top:150.000px;font-size:12.5px;color:#e6e6e6;letter-spacing:-0.05px;font-weight:700;">EDUCATION</div>
<div class="t" style="left:15.0px;top:608.000px;font-size:12.5px;color:#e6e6e6;letter-spacing:0.13px;font-weight:700;">E-COMMERCE</div>
<div class="t" style="left:15.0px;top:730.000px;font-size:12.5px;color:#e6e6e6;letter-spacing:-0.24px;font-weight:700;">CONTENT</div>
<div class="t" style="left:15.0px;top:891.000px;font-size:12.5px;color:#e6e6e6;letter-spacing:0.41px;font-weight:700;">COMMUNICATION</div>
<div class="t" style="left:70.6px;top:36.000px;font-size:23.5px;color:#ffffff;letter-spacing:0.23px;font-weight:700;">MarifaLMS</div>
<div class="t" style="left:342.0px;top:20.000px;font-size:12.25px;color:#2b2f3a;letter-spacing:0.00px;transform:scaleX(0.920);transform-origin:0 50%;-webkit-text-stroke:0.2px #2b2f3a;">SEARCH</div>
<div class="t" style="left:1539.6px;top:19.000px;font-size:13.75px;color:#2b2f3a;letter-spacing:0.00px;transform:scaleX(0.858);transform-origin:0 50%;">EN</div>
<div class="t" style="left:279.7px;top:91.000px;font-size:18.25px;color:#2b2f3a;letter-spacing:0.00px;transform:scaleX(0.881);transform-origin:0 50%;-webkit-text-stroke:0.3px #2b2f3a;">ENROLL LIST</div>
<div class="t" style="left:1610.0px;top:89.000px;font-size:14px;color:#3a3f4a;letter-spacing:0.44px;">Dashboard</div>
<div class="t" style="left:1695.2px;top:88.000px;font-size:14px;color:#3a3f4a;letter-spacing:0.00px;">|</div>
<div class="t" style="left:1714.0px;top:89.000px;font-size:14px;color:#3a3f4a;letter-spacing:0.23px;">Enrollment</div>
<div class="t" style="left:1795.2px;top:88.000px;font-size:14px;color:#3a3f4a;letter-spacing:0.00px;">|</div>
<div class="t" style="left:1815.0px;top:90.000px;font-size:13.75px;color:#2b2f3a;letter-spacing:-0.24px;">Enroll List</div>
<div class="t" style="left:300.0px;top:158.000px;font-size:18.5px;color:#2b2f3a;letter-spacing:0.39px;-webkit-text-stroke:0.35px #2b2f3a;">Filter Enroll History</div>
<div class="t" style="left:300.0px;top:202.000px;font-size:11.6px;color:#3d4250;letter-spacing:0.00px;transform:scaleX(0.931);transform-origin:0 50%;">SELECT COURSE</div>
<div class="t" style="left:826.0px;top:202.000px;font-size:11.6px;color:#3d4250;letter-spacing:0.00px;transform:scaleX(0.940);transform-origin:0 50%;">SELECT START DATE</div>
<div class="t" style="left:1351.0px;top:202.000px;font-size:11.6px;color:#3d4250;letter-spacing:0.00px;transform:scaleX(0.935);transform-origin:0 50%;">SELECT END DATE</div>
<div class="t" style="left:321.0px;top:239.000px;font-size:14px;color:#4b4f58;letter-spacing:0.09px;">Select Course</div>
<div class="t" style="left:847.0px;top:240.000px;font-size:11.6px;color:#5a5e68;letter-spacing:0.00px;transform:scaleX(0.931);transform-origin:0 50%;">DATE</div>
<div class="t" style="left:1372.0px;top:240.000px;font-size:11.6px;color:#5a5e68;letter-spacing:0.00px;transform:scaleX(0.931);transform-origin:0 50%;">DATE</div>
<div class="t" style="left:343.0px;top:302.000px;font-size:13px;color:#ffffff;letter-spacing:0.52px;font-weight:700;">Filter History</div>
<div class="t" style="left:300.0px;top:408.000px;font-size:18.5px;color:#2b2f3a;letter-spacing:0.56px;-webkit-text-stroke:0.35px #2b2f3a;">Enrolled Student List</div>
<div class="t" style="left:320.5px;top:463.000px;font-size:14px;color:#3a48a8;letter-spacing:0.00px;transform:scaleX(0.867);transform-origin:0 50%;">10</div>
<div class="t" style="left:380.5px;top:465.000px;font-size:14.5px;color:#3a48a8;letter-spacing:-0.17px;">Show entries</div>
<div class="t" style="left:896.0px;top:461.000px;font-size:13px;color:#2b2f3a;letter-spacing:0.18px;-webkit-text-stroke:0.25px #2b2f3a;">Quick Search</div>
<div class="t" style="left:416.0px;top:517.000px;font-size:11.9px;color:#2b2f3a;letter-spacing:0.00px;transform:scaleX(0.825);transform-origin:0 50%;-webkit-text-stroke:0.3px #2b2f3a;">SL</div>
<div class="t" style="left:513.0px;top:517.000px;font-size:11.9px;color:#2b2f3a;letter-spacing:-0.21px;-webkit-text-stroke:0.3px #2b2f3a;">IMAGE</div>
<div class="t" style="left:641.0px;top:517.000px;font-size:11.9px;color:#2b2f3a;letter-spacing:-0.29px;-webkit-text-stroke:0.3px #2b2f3a;">NAME</div>
<div class="t" style="left:787.5px;top:517.000px;font-size:11.9px;color:#2b2f3a;letter-spacing:0.00px;transform:scaleX(0.949);transform-origin:0 50%;-webkit-text-stroke:0.3px #2b2f3a;">EMAIL ADDRESS</div>
<div class="t" style="left:1044.0px;top:517.000px;font-size:11.9px;color:#2b2f3a;letter-spacing:0.00px;transform:scaleX(0.919);transform-origin:0 50%;-webkit-text-stroke:0.3px #2b2f3a;">COURSES ENROLLED</div>
<div class="t" style="left:1404.3px;top:517.000px;font-size:11.9px;color:#2b2f3a;letter-spacing:0.00px;transform:scaleX(0.891);transform-origin:0 50%;-webkit-text-stroke:0.3px #2b2f3a;">PRICE</div>
<div class="t" style="left:1520.0px;top:517.000px;font-size:11.9px;color:#2b2f3a;letter-spacing:0.00px;transform:scaleX(0.932);transform-origin:0 50%;-webkit-text-stroke:0.3px #2b2f3a;">ENROLLMENT DATE</div>
<div class="t" style="left:1715.0px;top:517.000px;font-size:11.9px;color:#2b2f3a;letter-spacing:0.02px;-webkit-text-stroke:0.3px #2b2f3a;">ACTION</div>
<div class="t" style="left:516.0px;top:583.000px;font-size:25.5px;color:#ffffff;letter-spacing:0.00px;transform:scaleX(0.793);transform-origin:0 50%;">JS</div>
<div class="t" style="left:418.8px;top:583.000px;font-size:15px;color:#585c66;letter-spacing:0.00px;">1</div>
<div class="t" style="left:626.8px;top:583.000px;font-size:15px;color:#585c66;letter-spacing:0.13px;">Jane Smith</div>
<div class="t" style="left:772.5px;top:583.000px;font-size:15px;color:#585c66;letter-spacing:0.48px;">student@marifalms.com</div>
<div class="t" style="left:1029.0px;top:583.000px;font-size:15px;color:#585c66;letter-spacing:0.38px;">Financial Accounting Fundamentals</div>
<div class="t" style="left:1389.0px;top:583.000px;font-size:14.25px;color:#585c66;letter-spacing:-0.20px;">Free</div>
<div class="t" style="left:1504.7px;top:583.000px;font-size:15px;color:#585c66;letter-spacing:-0.21px;">23 Mar, 2026</div>
<div class="t" style="left:1724.0px;top:583.000px;font-size:12px;color:#2b2f3a;letter-spacing:-0.07px;-webkit-text-stroke:0.3px #2b2f3a;">ACTION</div>
<div class="t" style="left:516.0px;top:660.000px;font-size:25.5px;color:#ffffff;letter-spacing:0.00px;transform:scaleX(0.793);transform-origin:0 50%;">JS</div>
<div class="t" style="left:420.6px;top:660.000px;font-size:15px;color:#585c66;letter-spacing:0.00px;">2</div>
<div class="t" style="left:626.8px;top:660.000px;font-size:15px;color:#585c66;letter-spacing:0.13px;">Jane Smith</div>
<div class="t" style="left:772.5px;top:660.000px;font-size:15px;color:#585c66;letter-spacing:0.48px;">student@marifalms.com</div>
<div class="t" style="left:1029.0px;top:660.000px;font-size:15px;color:#585c66;letter-spacing:0.00px;">MBA Business Management Essentials</div>
<div class="t" style="left:1389.0px;top:660.000px;font-size:14.75px;color:#585c66;letter-spacing:-0.17px;">$20.00</div>
<div class="t" style="left:1504.7px;top:660.000px;font-size:15px;color:#585c66;letter-spacing:-0.21px;">23 Mar, 2026</div>
<div class="t" style="left:516.0px;top:737.000px;font-size:25.5px;color:#ffffff;letter-spacing:0.00px;transform:scaleX(0.793);transform-origin:0 50%;">JS</div>
<div class="t" style="left:420.6px;top:737.000px;font-size:15px;color:#585c66;letter-spacing:0.00px;">3</div>
<div class="t" style="left:626.8px;top:737.000px;font-size:15px;color:#585c66;letter-spacing:0.13px;">Jane Smith</div>
<div class="t" style="left:772.5px;top:737.000px;font-size:15px;color:#585c66;letter-spacing:0.48px;">student@marifalms.com</div>
<div class="t" style="left:1029.0px;top:737.000px;font-size:15px;color:#585c66;letter-spacing:0.08px;">Blender 3D Modeling for Beginners</div>
<div class="t" style="left:1389.0px;top:737.000px;font-size:14.75px;color:#585c66;letter-spacing:-0.17px;">$20.00</div>
<div class="t" style="left:1504.7px;top:737.000px;font-size:15px;color:#585c66;letter-spacing:-0.21px;">23 Mar, 2026</div>
<div class="t" style="left:1724.0px;top:737.000px;font-size:12px;color:#2b2f3a;letter-spacing:-0.07px;-webkit-text-stroke:0.3px #2b2f3a;">ACTION</div>
<div class="t" style="left:516.0px;top:814.000px;font-size:25.5px;color:#ffffff;letter-spacing:0.00px;transform:scaleX(0.793);transform-origin:0 50%;">JS</div>
<div class="t" style="left:420.8px;top:814.000px;font-size:15px;color:#585c66;letter-spacing:0.00px;">4</div>
<div class="t" style="left:626.8px;top:814.000px;font-size:15px;color:#585c66;letter-spacing:0.13px;">Jane Smith</div>
<div class="t" style="left:772.5px;top:814.000px;font-size:15px;color:#585c66;letter-spacing:0.48px;">student@marifalms.com</div>
<div class="t" style="left:1029.0px;top:814.000px;font-size:15px;color:#585c66;letter-spacing:0.13px;">Creating 3D Environments in Blender</div>
<div class="t" style="left:1389.0px;top:814.000px;font-size:14.75px;color:#585c66;letter-spacing:-0.17px;">$20.00</div>
<div class="t" style="left:1504.7px;top:814.000px;font-size:15px;color:#585c66;letter-spacing:-0.21px;">23 Mar, 2026</div>
<div class="t" style="left:1724.0px;top:814.000px;font-size:12px;color:#2b2f3a;letter-spacing:-0.07px;-webkit-text-stroke:0.3px #2b2f3a;">ACTION</div>
<div class="t" style="left:516.0px;top:891.000px;font-size:25.5px;color:#ffffff;letter-spacing:0.00px;transform:scaleX(0.793);transform-origin:0 50%;">JS</div>
<div class="t" style="left:420.6px;top:891.000px;font-size:15px;color:#585c66;letter-spacing:0.00px;">5</div>
<div class="t" style="left:626.8px;top:891.000px;font-size:15px;color:#585c66;letter-spacing:0.13px;">Jane Smith</div>
<div class="t" style="left:772.5px;top:891.000px;font-size:15px;color:#585c66;letter-spacing:0.48px;">student@marifalms.com</div>
<div class="t" style="left:1029.0px;top:891.000px;font-size:15px;color:#585c66;letter-spacing:-0.02px;">UI/UX Design Masterclass with Adobe XD</div>
<div class="t" style="left:1389.0px;top:891.000px;font-size:14.75px;color:#585c66;letter-spacing:-0.17px;">$20.00</div>
<div class="t" style="left:1504.7px;top:891.000px;font-size:15px;color:#585c66;letter-spacing:-0.21px;">23 Mar, 2026</div>
<div class="t" style="left:1724.0px;top:891.000px;font-size:12px;color:#2b2f3a;letter-spacing:-0.07px;-webkit-text-stroke:0.3px #2b2f3a;">ACTION</div>
<div class="t" style="left:516.0px;top:968.000px;font-size:25.5px;color:#ffffff;letter-spacing:0.00px;transform:scaleX(0.793);transform-origin:0 50%;">JS</div>
<div class="t" style="left:1742.3px;top:632.000px;font-size:12px;color:#5f636c;letter-spacing:0.00px;transform:scaleX(0.892);transform-origin:0 50%;">REFUND COURSE</div>
<div class="t" style="left:1740.3px;top:663.000px;font-size:12px;color:#5f636c;letter-spacing:0.00px;transform:scaleX(0.927);transform-origin:0 50%;">CANCEL COURSE</div>
</div>
</div>
</body>
</html>
